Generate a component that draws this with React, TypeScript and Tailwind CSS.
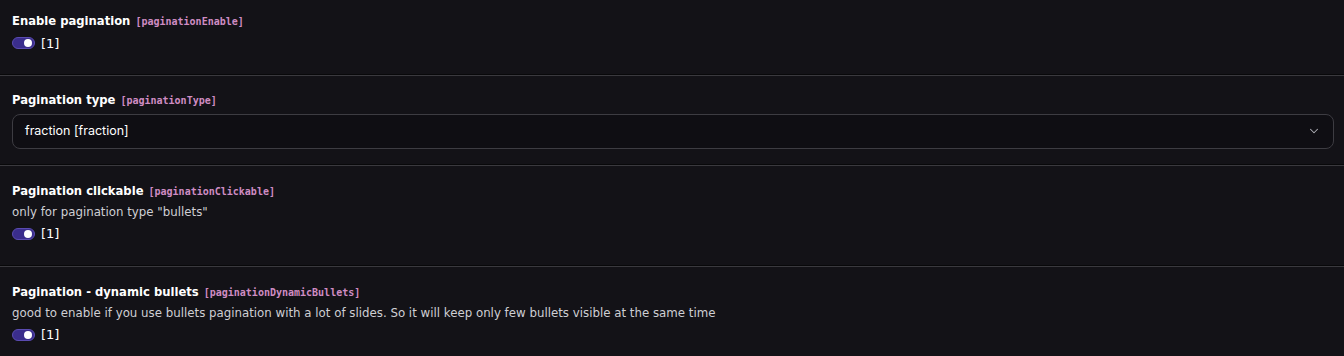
import React from "react";

function Toggle() {
  return (
    <div className="flex items-center gap-[6px]">
      <div className="w-[23px] h-[12px] rounded-full bg-[#3a2d8c] border border-[#5a4bb0] flex items-center justify-end pr-[2px]">
        <div className="w-[8px] h-[8px] rounded-full bg-white" />
      </div>
      <span className="text-[13px] text-white leading-none">[1]</span>
    </div>
  );
}

function Title({ label, code }: { label: string; code: string }) {
  return (
    <div className="flex items-baseline gap-[5px] leading-none">
      <span className="font-['DejaVu_Sans',sans-serif] font-bold text-[11.6px] text-white">{label}</span>
      <span className="font-['DejaVu_Sans_Mono',monospace] font-bold text-[10px] text-[#cf8cc3]">[{code}]</span>
    </div>
  );
}

function Sep() {
  return <div className="h-[2px] border-t border-[#08080a] bg-[#3a393e]" />;
}

export default function App() {
  return (
    <div className="w-[1344px] h-[356px] bg-[#131217] font-['DejaVu_Sans',sans-serif] overflow-hidden">
      <div className="px-[12px] pt-[16px] h-[74px]">
        <Title label="Enable pagination" code="paginationEnable" />
        <div className="mt-[9px]"><Toggle /></div>
      </div>
      <Sep />
      <div className="pl-[12px] pr-[10px] pt-[19px] h-[88px]">
        <Title label="Pagination type" code="paginationType" />
        <div className="mt-[7px] h-[35px] rounded-[8px] border border-[#3d3c42] bg-[#0f0e13] flex items-center justify-between pl-[12px] pr-[12px]">
          <span className="font-['Inter',sans-serif] text-[12.5px] text-white">fraction [fraction]</span>
          <svg width="14" height="14" viewBox="0 0 24 24" fill="none" stroke="#b0b0b8" strokeWidth="1.8" strokeLinecap="round" strokeLinejoin="round"><path d="m6 9 6 6 6-6"/></svg>
        </div>
      </div>
      <Sep />
      <div className="px-[12px] pt-[20px] h-[99px]">
        <Title label="Pagination clickable" code="paginationClickable" />
        <div className="mt-[9px] text-[11.8px] text-[#cfcfd4] leading-none">only for pagination type "bullets"</div>
        <div className="mt-[9px]"><Toggle /></div>
      </div>
      <Sep />
      <div className="px-[12px] pt-[20px]">
        <Title label="Pagination - dynamic bullets" code="paginationDynamicBullets" />
        <div className="mt-[9px] text-[11.8px] text-[#cfcfd4] leading-none">good to enable if you use bullets pagination with a lot of slides. So it will keep only few bullets visible at the same time</div>
        <div className="mt-[9px]"><Toggle /></div>
      </div>
    </div>
  );
}
